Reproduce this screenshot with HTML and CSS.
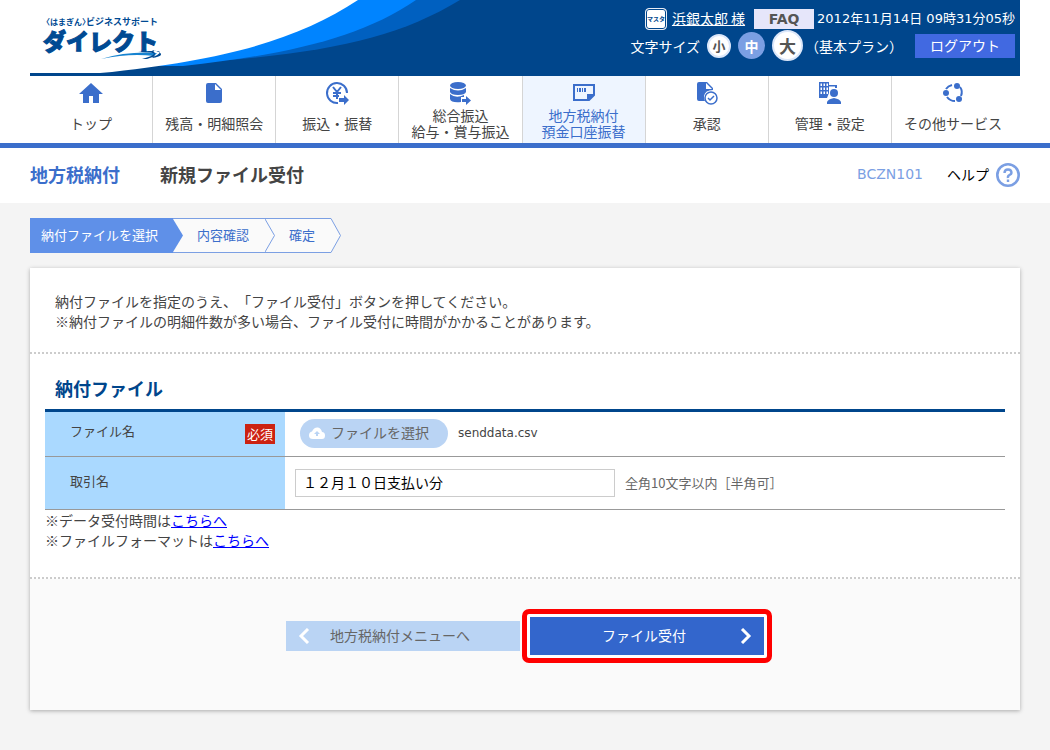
FILE: index.html
```html
<!DOCTYPE html>
<html lang="ja">
<head>
<meta charset="utf-8">
<meta name="viewport" content="width=device-width, initial-scale=1">
<title>地方税納付 新規ファイル受付</title>
<link rel="stylesheet" href="styles.css">
</head>
<body>
<header class="header">
  <svg class="brand" viewBox="0 0 440 76" role="img" aria-label="はまぎん ビジネスサポートダイレクト">
    <path fill="#0060c0" d="M0 0H430C370 36 310 50 200 60H0Z"/>
    <path fill="#0084ff" d="M0 0H386C330 38 260 54 153 66H0Z"/>
    <path fill="#fff" d="M0 0H328C270 38 200 60 70 73H0Z"/>
    <g fill="#004a93">
      <text class="brand-small" x="16" y="25">〈はまぎん〉<tspan class="brand-mid">ビジネスサポート</tspan></text>
      <text class="brand-large" x="13" y="50">ダイレクト</text>
    </g>
    <path fill="#1683d0" d="M71 59Q98 51 127 53L124 56Q100 53 71 59Z"/>
    <path fill="#004a93" d="M108 52Q124 52 124 54Q123 56 112 59L117 59Q130 55 130 52Q128 50 119 51ZM122 50Q132 52 131 55Q129 57 122 58Q128 54 122 50Z"/>
  </svg>
  <div class="account">
    <div class="account-row">
      <span class="master">マスタ</span>
      <a class="user" href="#">浜銀太郎 様</a>
      <a class="faq latin" href="#">FAQ</a>
      <time class="clock" datetime="2012-11-14T09:31:05">2012年11月14日 09時31分05秒</time>
    </div>
    <div class="account-row">
      <span>文字サイズ</span>
      <span class="sizes">
        <button class="size size-s" type="button">小</button>
        <button class="size size-m" type="button" aria-pressed="true">中</button>
        <button class="size size-l" type="button">大</button>
      </span>
      <span class="plan">（基本プラン）</span>
      <button class="logout" type="button">ログアウト</button>
    </div>
  </div>
</header>

<nav class="nav">
  <a class="nav-item" href="#">
    <svg class="nav-icon" viewBox="0 0 24 24"><path d="M12 2L24 13H20V22H14V15H10V22H4V13H0Z"/></svg>
    <span class="nav-label">トップ</span>
  </a>
  <a class="nav-item" href="#">
    <svg class="nav-icon" viewBox="0 0 24 24"><path fill-rule="evenodd" d="M6 2H14L20 8V20Q20 22 18 22H6Q4 22 4 20V4Q4 2 6 2ZM13 3V9H19Z"/></svg>
    <span class="nav-label">残高・明細照会</span>
  </a>
  <a class="nav-item" href="#">
    <svg class="nav-icon" viewBox="0 0 24 24"><path class="line" d="M22 12A10 10 0 1 0 13 22M8 6L12 11L16 6M12 11V18M8 12H16M8 15H14"/><path d="M14 17H19V14L24 19L19 24V21H14Z"/></svg>
    <span class="nav-label">振込・振替</span>
  </a>
  <a class="nav-item" href="#">
    <svg class="nav-icon" viewBox="0 0 24 24"><ellipse cx="10" cy="4.500" rx="8" ry="3.500"/><path d="M2 7Q10 12 18 7V11Q17 14 10 14Q3 14 2 11ZM2 13Q8 18 16 14V16H13V21Q3 22 2 18ZM14 18H18V15L23 19.500L18 24V21H14Z"/></svg>
    <span class="nav-label">総合振込<br>給与・賞与振込</span>
  </a>
  <a class="nav-item nav-current" href="#" aria-current="page">
    <svg class="nav-icon" viewBox="0 0 24 24"><path class="line" d="M2 4H22V14L17 19H2Z"/><path d="M15 20V13H23ZM5 7H6V11H5ZM7 7H9V11H7ZM10 7H11V11H10ZM12 7H14V11H12Z"/></svg>
    <span class="nav-label">地方税納付<br>預金口座振替</span>
  </a>
  <a class="nav-item" href="#">
    <svg class="nav-icon" viewBox="0 0 24 24"><path fill-rule="evenodd" d="M4 1H12L18 7V9Q10 9 9 15Q9 18 10 20H4Q2 20 2 18V3Q2 1 4 1ZM11 2V8H17Z"/><circle class="line thin" cx="16" cy="17" r="6"/><path class="line thin" d="M13 17L15 19L19 15"/></svg>
    <span class="nav-label">承認</span>
  </a>
  <a class="nav-item" href="#">
    <svg class="nav-icon" viewBox="0 0 24 24"><path fill-rule="evenodd" d="M1 1H11V4H19V7H17V5.500H11V12L9 17H1ZM2.500 2.500V5H4V2.500ZM5.500 2.500V5H7V2.500ZM8.500 2.500V5H10V2.500ZM2.500 6.500V9H4V6.500ZM5.500 6.500V9H7V6.500ZM8.500 6.500V9H10V6.500ZM2.500 10.500V13H4V10.500ZM5.500 10.500V13H7V10.500ZM8.500 10.500V13H10V10.500Z"/><circle cx="16" cy="12" r="4"/><path d="M9 23V21Q10 18 16 17Q22 18 23 21V23Z"/></svg>
    <span class="nav-label">管理・設定</span>
  </a>
  <a class="nav-item" href="#">
    <svg class="nav-icon" viewBox="0 0 24 24"><circle cx="16" cy="5" r="3"/><circle cx="5" cy="12" r="3"/><circle cx="18" cy="18" r="3"/><path class="line" d="M5 8Q7 5 11 4M19 6Q22 10 20 15M6 16Q9 20 14 20"/></svg>
    <span class="nav-label">その他サービス</span>
  </a>
</nav>

<div class="titlebar">
  <span class="category">地方税納付</span>
  <h1 class="title">新規ファイル受付</h1>
  <span class="code latin">BCZN101</span>
  <a class="help" href="#">ヘルプ
    <svg width="24" height="24" viewBox="0 0 24 24" aria-hidden="true"><g fill="none" stroke="#7b9fe3"><circle cx="12" cy="12" r="10.7" stroke-width="2.6"/><path stroke-width="2.4" d="M8.500 10Q8.500 6.500 12 6.500T15.500 10Q15.500 11 13.500 12T12 15M12 16.500V19"/></g></svg>
  </a>
</div>

<main class="main">
  <ol class="steps">
    <li class="step step-current" aria-current="step">納付ファイルを選択</li>
    <li class="tip" aria-hidden="true"><svg width="10" height="35" viewBox="0 0 10 35"><path fill="#fafafa" d="M0 0H10V35H0Z"/><path fill="none" stroke="#7b9fe3" d="M0 .5H10M0 34.500H10"/><path fill="#5f90e8" d="M0 1L10 17.500L0 34Z"/></svg></li>
    <li class="step">内容確認</li>
    <li class="tip" aria-hidden="true"><svg width="10" height="35" viewBox="0 0 10 35"><path fill="#fafafa" d="M0 0H10V35H0Z"/><path fill="none" stroke="#7b9fe3" d="M0 .5H10M0 34.500H10M0 1L9.500 17.500L0 34"/></svg></li>
    <li class="step">確定</li>
    <li class="tip" aria-hidden="true"><svg width="10" height="35" viewBox="0 0 10 35"><path fill="#fafafa" stroke="#7b9fe3" d="M0 .5L9.500 17.500L0 34.500"/></svg></li>
  </ol>

  <form class="card">
    <p class="lead">納付ファイルを指定のうえ、「ファイル受付」ボタンを押してください。<br>※納付ファイルの明細件数が多い場合、ファイル受付に時間がかかることがあります。</p>
    <section class="section">
      <h2 class="heading">納付ファイル</h2>
      <table class="fields">
        <tr>
          <th scope="row"><div class="field-name"><label for="file">ファイル名</label><span class="required">必須</span></div></th>
          <td>
            <div class="field-value file-value">
              <button class="choose" id="file" type="button"><svg width="18" height="18" viewBox="0 0 18 18" aria-hidden="true"><path fill="#fff" fill-rule="evenodd" d="M5 15Q1 15 1 11.500Q1 8 4 7.500Q6 3 10 3.500Q13 4 14 8Q17 8 17 11.500Q17 15 14 15ZM9 7L6 10H8V12H10V10H12Z"/></svg><span>ファイルを選択</span></button>
              <span class="filename">senddata.csv</span>
            </div>
          </td>
        </tr>
        <tr>
          <th scope="row"><div class="field-name"><label for="deal">取引名</label></div></th>
          <td>
            <div class="field-value">
              <input class="deal" id="deal" type="text" value="１２月１０日支払い分">
              <span class="hint">全角10文字以内［半角可］</span>
            </div>
          </td>
        </tr>
      </table>
      <p class="notes">※データ受付時間は<a href="#">こちらへ</a><br>※ファイルフォーマットは<a href="#">こちらへ</a></p>
    </section>
    <div class="actions">
      <button class="button back" type="button"><svg width="12" height="16" viewBox="0 0 12 16" aria-hidden="true"><path d="M10 1L3 8L10 15"/></svg><span>地方税納付メニューへ</span></button>
      <div class="highlight">
        <button class="button submit" type="submit"><span>ファイル受付</span><svg width="12" height="16" viewBox="0 0 12 16" aria-hidden="true"><path d="M2 1L9 8L2 15"/></svg></button>
      </div>
    </div>
  </form>
</main>
</body>
</html>
```
FILE: styles.css
```css
* { box-sizing: border-box; }

body {
  margin: 0;
  background: #fff;
  color: #444;
  font: 14px/20px "Noto Sans CJK JP", sans-serif;
  text-spacing-trim: space-all;
}

button, input { font: inherit; }
button { border: 0; padding: 0; cursor: pointer; }
svg { display: block; flex: none; }
.latin, .clock, .filename { font-family: "DejaVu Sans", "Noto Sans CJK JP", sans-serif; }

/* Header */
.header {
  display: flex;
  justify-content: space-between;
  margin: 0 30px;
  background: #00468c;
  color: #fff;
}
.brand { width: 440px; height: 76px; }
.brand-small { font-size: 8px; font-weight: 700; font-feature-settings: "halt"; }
.brand-mid { font-size: 9px; }
.brand-large { font-size: 23px; font-weight: 900; stroke: #004a93; stroke-width: 1px; }
.account {
  display: flex;
  flex-direction: column;
  flex: none;
  padding: 8px 5px 0 0;
}
.account-row {
  display: flex;
  align-items: center;
  justify-content: flex-end;
  white-space: nowrap;
}
.master {
  width: 22px;
  height: 22px;
  border: 1px solid #e8edf5;
  border-radius: 4px;
  background: #fff;
  box-shadow: inset 0 0 0 1px #00468c;
  color: #00468c;
  font-size: 6px;
  font-weight: 700;
  text-align: center;
}
.user { margin: 0 9px 2px 5px; color: #fff; }
.faq {
  width: 60px;
  margin-right: 3px;
  background: #e6e6fa;
  color: #555;
  font-weight: 700;
  text-align: center;
  text-decoration: none;
}
.clock { font-size: 13px; }
.sizes { display: flex; align-items: center; gap: 7px; margin: 0 2px 0 7px; }
.size {
  border-radius: 50%;
  background: #fff;
  color: #555;
  font-weight: 700;
}
.size-s { width: 24px; height: 24px; border: 2px solid #dbe7fa; font-size: 13px; line-height: 18px; }
.size-m { width: 27px; height: 27px; background: #7b9fe3; color: #fff; }
.size-l { width: 31px; height: 31px; border: 2px solid #dbe7fa; font-size: 17px; line-height: 24px; }
.plan { margin-right: 12px; }
.logout { width: 100px; height: 24px; padding-bottom: 2px; background: #4169e1; color: #fff; }

/* Global navigation */
.nav {
  display: flex;
  padding: 0 36px 0 30px;
  border-bottom: 5px solid #3b6ecb;
}
.nav-item {
  display: flex;
  flex: 1;
  flex-direction: column;
  align-items: center;
  padding: 5px 0 3px;
  border-right: 1px solid #d5d5d5;
  color: #444;
  line-height: 16px;
  text-align: center;
  text-decoration: none;
  white-space: nowrap;
}
.nav-item:last-child { border-right: 0; }
.nav-current { background: #eef5ff; color: #3b6ecb; }
.nav-icon { width: 24px; height: 24px; fill: #3b6ecb; }
.nav-icon .line { fill: none; stroke: #3b6ecb; stroke-width: 2; }
.nav-icon .thin { stroke-width: 1.5; }
.nav-label { display: flex; align-items: center; height: 35px; }

/* Page title */
.titlebar {
  display: flex;
  align-items: center;
  padding: 13px 30px 15px;
  line-height: 27px;
}
.category, .title { margin: 0; font-size: 18px; font-weight: 700; }
.category { color: #3b6ecb; }
.title { margin-left: 40px; }
.code { margin-left: auto; color: #7b9fe3; }
.help {
  display: flex;
  align-items: center;
  gap: 7px;
  margin-left: 24px;
  color: #000;
  text-decoration: none;
}

/* Content */
.main { padding: 15px 30px 40px; background: #f4f4f4; }
.steps {
  display: flex;
  margin: 0 0 15px;
  padding: 0;
  list-style: none;
  font-size: 13px;
}
.step {
  height: 35px;
  padding: 0 16px 0 14px;
  border: solid #7b9fe3;
  border-width: 1px 0;
  background: #fafafa;
  color: #3b6ecb;
  line-height: 31px;
}
.step-current {
  padding: 0 15px 0 11px;
  border-color: #5f90e8;
  background: #5f90e8;
  color: #fff;
}

.card {
  background: #fff;
  box-shadow: 0 1px 4px #aaa;
}
.lead {
  margin: 0;
  padding: 23px 25px 21px;
  border-bottom: 2px dotted #ccc;
}
.section {
  padding: 19px 15px 27px;
  border-bottom: 2px dotted #ccc;
}
.heading {
  margin: 0;
  padding: 0 10px 6px;
  color: #00468c;
  font-size: 18px;
  line-height: 30px;
}
.fields {
  width: 100%;
  border-top: 3px solid #00468c;
  border-spacing: 0;
}
.fields th, .fields td { padding: 0; border-bottom: 1px solid #999; }
.fields th {
  width: 240px;
  padding: 9px 10px 0 25px;
  background: #aad9ff;
  font-weight: 400;
  text-align: left;
  vertical-align: top;
}
.fields tr + tr th { padding-top: 14px; }
.field-name { display: flex; justify-content: space-between; align-items: flex-start; font-size: 13px; }
.required { margin-top: 3px; padding: 0 2px; background: #cc2211; color: #fff; }
.field-value { display: flex; align-items: center; height: 52px; padding: 0 10px; gap: 10px; }
.file-value { height: 44px; padding: 0 15px 2px; }
.choose {
  display: flex;
  align-items: center;
  gap: 5px;
  height: 29px;
  padding: 0 19px 0 8px;
  border-radius: 15px;
  background: #bad4f4;
  color: #666;
}
.choose span { padding-bottom: 2px; }
.filename { font-size: 12px; }
.deal {
  width: 320px;
  height: 28px;
  padding: 0 7px 2px;
  border: 1px solid #ccc;
  color: #000;
}
.hint { font-size: 13px; color: #666; }
.notes { margin: 0; }
.notes a { color: #00f; }

.actions {
  display: flex;
  align-items: center;
  justify-content: center;
  gap: 2px;
  padding: 30px 0 47px 8px;
  background: #fafafa;
}
.button {
  display: flex;
  align-items: center;
  width: 234px;
  padding: 0 12px;
}
.button span { flex: 1; padding: 0 18px 2px 0; text-align: center; }
.button path { fill: none; stroke: #fff; stroke-width: 3; }
.back { height: 30px; background: #bad4f4; color: #666; }
.highlight { padding: 3px; border: 5px solid #f00; border-radius: 7px; background: #fff; }
.submit { height: 38px; background: #3366cc; color: #fff; }
.submit span { padding: 0 0 2px 6px; }
```
